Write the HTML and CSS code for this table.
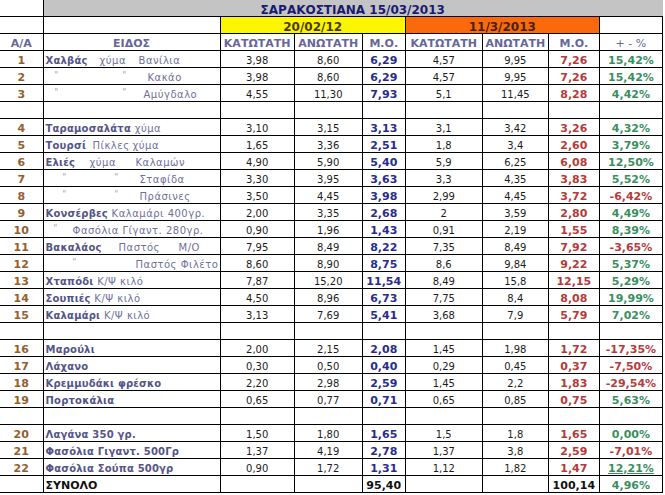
FILE: index.html
```html
<!DOCTYPE html>
<html lang="el">
<head>
<meta charset="utf-8">
<title>ΣΑΡΑΚΟΣΤΙΑΝΑ 15/03/2013</title>
<link rel="stylesheet" href="styles.css">
</head>
<body>
<table class="sheet">
  <colgroup>
    <col class="c-aa"><col class="c-name"><col class="c-k1"><col class="c-a1"><col class="c-m1"><col class="c-k2"><col class="c-a2"><col class="c-m2"><col class="c-pct">
  </colgroup>
  <tbody>
    <tr class="r-title">
      <td class="aa-empty"></td>
      <td class="title" colspan="8">ΣΑΡΑΚΟΣΤΙΑΝΑ 15/03/2013</td>
    </tr>
    <tr class="r-dates">
      <td></td>
      <td></td>
      <td class="date-old" colspan="3">20/02/12</td>
      <td class="date-new" colspan="3">11/3/2013</td>
      <td></td>
    </tr>
    <tr class="r-head">
      <td class="hd">Α/Α</td>
      <td class="hd">ΕΙΔΟΣ</td>
      <td class="hd">ΚΑΤΩΤΑΤΗ</td>
      <td class="hd">ΑΝΩΤΑΤΗ</td>
      <td class="hd">Μ.Ο.</td>
      <td class="hd">ΚΑΤΩΤΑΤΗ</td>
      <td class="hd">ΑΝΩΤΑΤΗ</td>
      <td class="hd">Μ.Ο.</td>
      <td class="hd hd-pct">+ - %</td>
    </tr>

    <tr>
      <td class="aa">1</td>
      <td class="nm"><b class="t w54">Χαλβάς</b><span class="t w39">χύμα</span><span>Βανίλια</span></td>
      <td>3,98</td><td>8,60</td><td class="m1">6,29</td><td>4,57</td><td>9,95</td><td class="m2">7,26</td><td class="up">15,42%</td>
    </tr>
    <tr>
      <td class="aa">2</td>
      <td class="nm"><span class="t w9"></span><span class="t w68 dt">"</span><span class="t w25 dt">"</span><span>Κακάο</span></td>
      <td>3,98</td><td>8,60</td><td class="m1">6,29</td><td>4,57</td><td>9,95</td><td class="m2">7,26</td><td class="up">15,42%</td>
    </tr>
    <tr>
      <td class="aa">3</td>
      <td class="nm"><span class="t w9"></span><span class="t w68 dt">"</span><span class="t w21 dt">"</span><span>Αμύγδαλο</span></td>
      <td>4,55</td><td>11,30</td><td class="m1">7,93</td><td>5,1</td><td>11,45</td><td class="m2">8,28</td><td class="up">4,42%</td>
    </tr>
    <tr class="blank"><td></td><td></td><td></td><td></td><td></td><td></td><td></td><td></td><td></td></tr>

    <tr>
      <td class="aa">4</td>
      <td class="nm"><b>Ταραμοσαλάτα</b> <span>χύμα</span></td>
      <td>3,10</td><td>3,15</td><td class="m1">3,13</td><td>3,1</td><td>3,42</td><td class="m2">3,26</td><td class="up">4,32%</td>
    </tr>
    <tr>
      <td class="aa">5</td>
      <td class="nm"><b class="t w47">Τουρσί</b><span class="t w40">Πίκλες</span><span>χύμα</span></td>
      <td>1,65</td><td>3,36</td><td class="m1">2,51</td><td>1,8</td><td>3,4</td><td class="m2">2,60</td><td class="up">3,79%</td>
    </tr>
    <tr>
      <td class="aa">6</td>
      <td class="nm"><b class="t w44">Ελιές</b><span class="t w46">χύμα</span><span>Καλαμών</span></td>
      <td>4,90</td><td>5,90</td><td class="m1">5,40</td><td>5,9</td><td>6,25</td><td class="m2">6,08</td><td class="up">12,50%</td>
    </tr>
    <tr>
      <td class="aa">7</td>
      <td class="nm"><span class="t w17"></span><span class="t w52 dt">"</span><span class="t w25 dt">"</span><span>Σταφίδα</span></td>
      <td>3,30</td><td>3,95</td><td class="m1">3,63</td><td>3,3</td><td>4,35</td><td class="m2">3,83</td><td class="up">5,52%</td>
    </tr>
    <tr>
      <td class="aa">8</td>
      <td class="nm"><span class="t w17"></span><span class="t w52 dt">"</span><span class="t w25 dt">"</span><span>Πράσινες</span></td>
      <td>3,50</td><td>4,45</td><td class="m1">3,98</td><td>2,99</td><td>4,45</td><td class="m2">3,72</td><td class="down">-6,42%</td>
    </tr>
    <tr>
      <td class="aa">9</td>
      <td class="nm"><b>Κονσέρβες</b> <span>Καλαμάρι 400γρ.</span></td>
      <td>2,00</td><td>3,35</td><td class="m1">2,68</td><td>2</td><td>3,59</td><td class="m2">2,80</td><td class="up">4,49%</td>
    </tr>
    <tr>
      <td class="aa">10</td>
      <td class="nm"><span class="t w8"></span><span class="t w19 dt">"</span><span>Φασόλια Γίγαντ. 280γρ.</span></td>
      <td>0,90</td><td>1,96</td><td class="m1">1,43</td><td>0,91</td><td>2,19</td><td class="m2">1,55</td><td class="up">8,39%</td>
    </tr>
    <tr>
      <td class="aa">11</td>
      <td class="nm"><b class="t w73">Βακαλάος</b><span class="t w60">Παστός</span><span>Μ/Ο</span></td>
      <td>7,95</td><td>8,49</td><td class="m1">8,22</td><td>7,35</td><td>8,49</td><td class="m2">7,92</td><td class="down">-3,65%</td>
    </tr>
    <tr>
      <td class="aa">12</td>
      <td class="nm"><span class="t w27"></span><span class="t w63 dt">"</span><span>Παστός Φιλέτο</span></td>
      <td>8,60</td><td>8,90</td><td class="m1">8,75</td><td>8,6</td><td>9,84</td><td class="m2">9,22</td><td class="up">5,37%</td>
    </tr>
    <tr>
      <td class="aa">13</td>
      <td class="nm"><b>Χταπόδι</b> <span>Κ/Ψ κιλό</span></td>
      <td>7,87</td><td>15,20</td><td class="m1">11,54</td><td>8,49</td><td>15,8</td><td class="m2">12,15</td><td class="up">5,29%</td>
    </tr>
    <tr>
      <td class="aa">14</td>
      <td class="nm"><b>Σουπιές</b> <span>Κ/Ψ κιλό</span></td>
      <td>4,50</td><td>8,96</td><td class="m1">6,73</td><td>7,75</td><td>8,4</td><td class="m2">8,08</td><td class="up">19,99%</td>
    </tr>
    <tr>
      <td class="aa">15</td>
      <td class="nm"><b>Καλαμάρι</b> <span>Κ/Ψ κιλό</span></td>
      <td>3,13</td><td>7,69</td><td class="m1">5,41</td><td>3,68</td><td>7,9</td><td class="m2">5,79</td><td class="up">7,02%</td>
    </tr>
    <tr class="blank"><td></td><td></td><td></td><td></td><td></td><td></td><td></td><td></td><td></td></tr>

    <tr>
      <td class="aa">16</td>
      <td class="nm"><b>Μαρούλι</b></td>
      <td>2,00</td><td>2,15</td><td class="m1">2,08</td><td>1,45</td><td>1,98</td><td class="m2">1,72</td><td class="down">-17,35%</td>
    </tr>
    <tr>
      <td class="aa">17</td>
      <td class="nm"><b>Λάχανο</b></td>
      <td>0,30</td><td>0,50</td><td class="m1">0,40</td><td>0,29</td><td>0,45</td><td class="m2">0,37</td><td class="down">-7,50%</td>
    </tr>
    <tr>
      <td class="aa">18</td>
      <td class="nm"><b>Κρεμμυδάκι φρέσκο</b></td>
      <td>2,20</td><td>2,98</td><td class="m1">2,59</td><td>1,45</td><td>2,2</td><td class="m2">1,83</td><td class="down">-29,54%</td>
    </tr>
    <tr>
      <td class="aa">19</td>
      <td class="nm"><b>Πορτοκάλια</b></td>
      <td>0,65</td><td>0,77</td><td class="m1">0,71</td><td>0,65</td><td>0,85</td><td class="m2">0,75</td><td class="up">5,63%</td>
    </tr>
    <tr class="blank"><td></td><td></td><td></td><td></td><td></td><td></td><td></td><td></td><td></td></tr>

    <tr>
      <td class="aa">20</td>
      <td class="nm"><b>Λαγάνα 350 γρ.</b></td>
      <td>1,50</td><td>1,80</td><td class="m1">1,65</td><td>1,5</td><td>1,8</td><td class="m2">1,65</td><td class="up">0,00%</td>
    </tr>
    <tr>
      <td class="aa">21</td>
      <td class="nm"><b>Φασόλια Γιγαντ. 500Γρ</b></td>
      <td>1,37</td><td>4,19</td><td class="m1">2,78</td><td>1,37</td><td>3,8</td><td class="m2">2,59</td><td class="down">-7,01%</td>
    </tr>
    <tr>
      <td class="aa">22</td>
      <td class="nm"><b>Φασόλια Σούπα 500γρ</b></td>
      <td>0,90</td><td>1,72</td><td class="m1">1,31</td><td>1,12</td><td>1,82</td><td class="m2">1,47</td><td class="up ul">12,21%</td>
    </tr>
    <tr class="r-total">
      <td></td>
      <td class="nm total-label">ΣΥΝΟΛΟ</td>
      <td></td><td></td><td class="tot">95,40</td><td></td><td></td><td class="tot">100,14</td><td class="up">4,96%</td>
    </tr>
  </tbody>
</table>
</body>
</html>
```

FILE: styles.css
```css
html, body {
  margin: 0;
  padding: 0;
  background: #ffffff;
}

body {
  font-family: "DejaVu Sans", Verdana, sans-serif;
  color: #1c1c1c;
}

.sheet {
  border-collapse: collapse;
  table-layout: fixed;
  width: 663px;
  font-size: 10px;
  line-height: 12px;
  color: #1c1c1c;
  text-align: center;
}

.c-aa { width: 43px; }
.c-name { width: 177px; }
.c-k1 { width: 74px; }
.c-a1 { width: 68px; }
.c-m1 { width: 43px; }
.c-k2 { width: 77px; }
.c-a2 { width: 66px; }
.c-m2 { width: 51px; }
.c-pct { width: 63px; }

.sheet tr { height: 17px; }
.sheet tr.r-title { height: 16px; }

.sheet td {
  border: 1px solid #000;
  padding: 0 1px;
  vertical-align: bottom;
  white-space: nowrap;
  overflow: hidden;
}

.sheet tr td:first-child { border-left: none; }

/* title row */
.sheet .r-title td { border-top: none; }
.sheet .title {
  background: #c4c4c4;
  border-right-color: #c4c4c4;
  color: #1a1a72;
  font-weight: bold;
  font-size: 12px;
}

/* dates row */
.date-old {
  background: #fcf500;
  color: #4a3c08;
  font-weight: bold;
  font-size: 12px;
}
.date-new {
  background: #fa6a0c;
  color: #4a2208;
  font-weight: bold;
  font-size: 12px;
}

/* header row */
.hd {
  color: #666699;
  font-weight: bold;
  font-size: 11px;
}
.hd-pct { font-weight: normal; }

/* cells */
.aa {
  color: #93602e;
  font-weight: bold;
  font-size: 11px;
}

.sheet .nm {
  text-align: left;
  padding-left: 2px;
  color: #6f6f9c;
  letter-spacing: 0.5px;
}
.sheet .nm b {
  color: #545488;
  font-weight: bold;
  letter-spacing: 0.2px;
}

.t { display: inline-block; }
.w8 { width: 8px; }
.w9 { width: 9px; }
.w17 { width: 17px; }
.w19 { width: 19px; }
.w21 { width: 21px; }
.w25 { width: 25px; }
.w27 { width: 27px; }
.w39 { width: 39px; }
.w40 { width: 40px; }
.w44 { width: 44px; }
.w46 { width: 46px; }
.w47 { width: 47px; }
.w52 { width: 52px; }
.w54 { width: 54px; }
.w60 { width: 60px; }
.w63 { width: 63px; }
.w68 { width: 68px; }
.w73 { width: 73px; }

.sheet .dt {
  color: #9a9abb;
  font-size: 8px;
  letter-spacing: 0;
  vertical-align: top;
  line-height: 8px;
}

.m1 {
  color: #2b2b8f;
  font-weight: bold;
  font-size: 11px;
}
.m2 {
  color: #b53a3a;
  font-weight: bold;
  font-size: 11px;
}
.up {
  color: #3a8f60;
  font-weight: bold;
  font-size: 11px;
}
.down {
  color: #b83c3c;
  font-weight: bold;
  font-size: 11px;
}
.ul { text-decoration: underline; }

.sheet .total-label {
  color: #111;
  font-weight: bold;
  font-size: 11px;
  letter-spacing: 0;
}
.tot {
  color: #111;
  font-weight: bold;
  font-size: 11px;
}
```
